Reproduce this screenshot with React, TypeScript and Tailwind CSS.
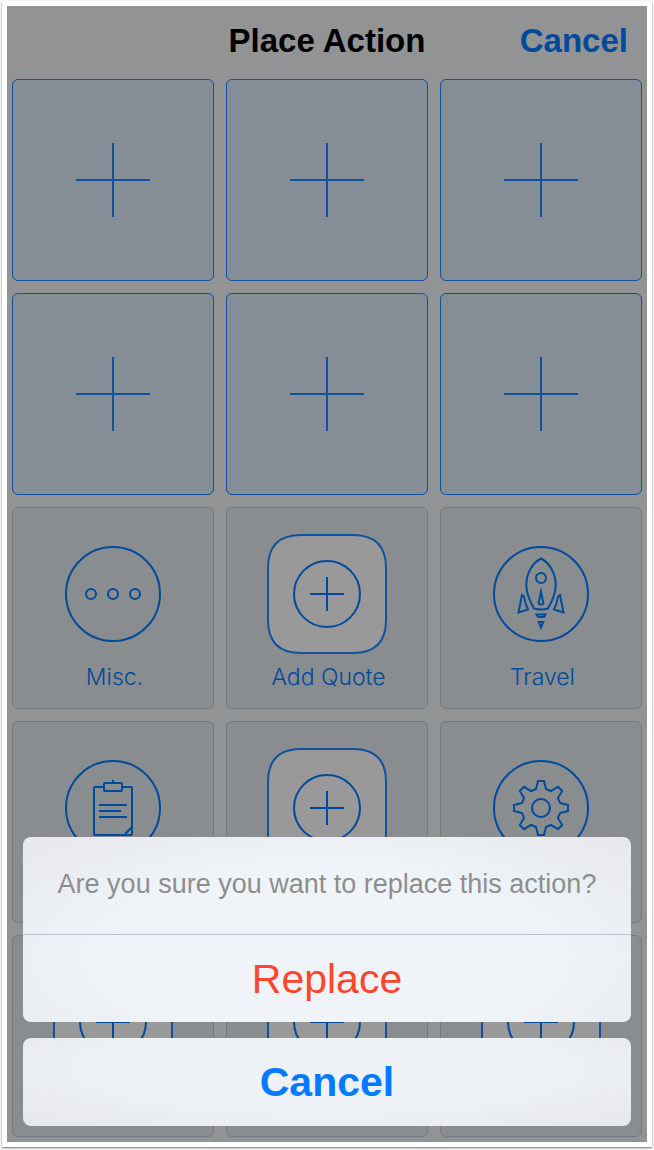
import type { ReactNode } from "react";

type IconName = "dots" | "app" | "rocket" | "clipboard" | "gear";

type Tile =
  | { kind: "empty" }
  | { kind: "action"; icon: IconName; label?: string };

const tiles: Tile[] = [
  { kind: "empty" },
  { kind: "empty" },
  { kind: "empty" },
  { kind: "empty" },
  { kind: "empty" },
  { kind: "empty" },
  { kind: "action", icon: "dots", label: "Misc." },
  { kind: "action", icon: "app", label: "Add Quote" },
  { kind: "action", icon: "rocket", label: "Travel" },
  { kind: "action", icon: "clipboard" },
  { kind: "action", icon: "app" },
  { kind: "action", icon: "gear" },
  { kind: "action", icon: "app" },
  { kind: "action", icon: "app" },
  { kind: "action", icon: "app" },
];

// Outline of an eight-toothed gear centred on (60, 60).
function gearPath(): string {
  const tooth = [
    [-5, -19],
    [-3, -27],
    [3, -27],
    [5, -19],
  ];
  const points: string[] = [];
  for (let i = 0; i < 8; i++) {
    const a = (i * Math.PI) / 4;
    for (const [x, y] of tooth) {
      const px = 60 + x * Math.cos(a) - y * Math.sin(a);
      const py = 60 + x * Math.sin(a) + y * Math.cos(a);
      points.push(`${px.toFixed(2)} ${py.toFixed(2)}`);
    }
  }
  return `M${points.join("L")}Z`;
}

const glyphs: Record<IconName, ReactNode> = {
  dots: (
    <>
      <circle cx="60" cy="60" r="47" />
      <circle cx="38" cy="60" r="5" />
      <circle cx="60" cy="60" r="5" />
      <circle cx="82" cy="60" r="5" />
    </>
  ),
  app: (
    <>
      <path
        d="M34 1H86C108 1 119 12 119 34V86C119 108 108 119 86 119H34C12 119 1 108 1 86V34C1 12 12 1 34 1Z"
        fill="#999999"
        stroke="#1152a0"
      />
      <circle cx="60" cy="60" r="33" />
      <path d="M60 43V77M43 60H77" />
    </>
  ),
  rocket: (
    <>
      <circle cx="60" cy="60" r="47" />
      <path d="M60 24.500C51.500 29 45.300 39 45.300 51C45.300 60 49 67.500 53 74.500Q60 76.500 67 74.500C71 67.500 74.700 60 74.700 51C74.700 39 68.500 29 60 24.500Z" />
      <circle cx="60" cy="44" r="5" />
      <path
        d="M60 57.500L57.500 69.500Q60 71.500 62.500 69.500Z"
        strokeMiterlimit="10"
      />
      <path d="M41 61L37.500 78.500L47 75.500C44.500 70.500 43.500 66.500 43 62.500Z" />
      <path d="M79 61L82.500 78.500L73 75.500C75.500 70.500 76.500 66.500 77 62.500Z" />
      <path d="M55.500 80.500H64.500L63 83H57Z" />
      <path d="M57.800 88H62.200L60 93.500Z" />
    </>
  ),
  clipboard: (
    <>
      <circle cx="60" cy="60" r="47" />
      <path d="M51 39H42Q41 39 41 40V86Q41 87 42 87H78Q79 87 79 86V40Q79 39 78 39H69" />
      <rect x="51" y="35" width="18" height="8" rx="1" />
      <path d="M60 32V35M46 57H74M46 63H68M46 69H74M72 86L79 79" />
    </>
  ),
  gear: (
    <>
      <circle cx="60" cy="60" r="47" />
      <path d={gearPath()} />
      <circle cx="60" cy="60" r="9" />
    </>
  ),
};

function ActionIcon({ name }: { name: IconName }) {
  return (
    <svg
      viewBox="0 0 120 120"
      className="size-[120px] shrink-0 fill-none stroke-[#004a9b] stroke-2"
      aria-hidden="true"
    >
      {glyphs[name]}
    </svg>
  );
}

function EmptyTile() {
  return (
    <button
      type="button"
      aria-label="Empty slot"
      className="flex aspect-square items-center justify-center rounded-md border border-[#1152a0] bg-[#858d96]"
    >
      <svg
        viewBox="0 0 74 74"
        className="size-[74px] fill-none stroke-[#1152a0] stroke-2"
        aria-hidden="true"
      >
        <path d="M37 0V74M0 37H74" />
      </svg>
    </button>
  );
}

function ActionTile({ icon, label }: { icon: IconName; label?: string }) {
  return (
    <button
      type="button"
      aria-label={label ?? "Action"}
      className="flex aspect-square flex-col items-center justify-start gap-2 rounded-md border border-[#717a84] bg-[#898d90] pt-[26px]"
    >
      <ActionIcon name={icon} />
      {label && (
        <span className="pl-[3px] font-['Inter','Liberation_Sans',sans-serif] text-[23px] leading-[30px] font-light text-[#004a9b]">
          {label}
        </span>
      )}
    </button>
  );
}

function ActionSheet() {
  return (
    <div
      role="dialog"
      aria-labelledby="sheet-message"
      className="absolute inset-x-4 bottom-4 flex flex-col gap-4"
    >
      <div className="overflow-hidden rounded-lg bg-radial-[ellipse_at_50%_65%] from-[#f0f4f9] from-50% to-[#e6e8ea]">
        <p
          id="sheet-message"
          className="flex h-[97px] items-center justify-center px-4 pb-1 text-center text-[27px] leading-8 text-[#8e8e8e]"
        >
          Are you sure you want to replace this action?
        </p>
        <button
          type="button"
          className="h-[88px] w-full border-t border-[#b1c5db] text-[41px] leading-[48px] text-[#ff462b]"
        >
          Replace
        </button>
      </div>
      <button
        type="button"
        className="h-[88px] w-full rounded-lg bg-radial-[ellipse_at_50%_35%] from-[#eef2f6] from-50% to-[#e6e7e9] text-[41px] leading-[48px] font-bold text-[#007aff]"
      >
        Cancel
      </button>
    </div>
  );
}

export default function App() {
  return (
    <div className="bg-white px-[2px] pt-px pb-[3px] font-['Liberation_Sans',Arial,sans-serif]">
      <div className="bg-white p-[5px] shadow-[0_1px_2px_rgba(0,0,0,0.6)]">
        <main className="relative bg-[#929394]">
          <header className="grid h-[73px] grid-cols-[1fr_auto_1fr] items-center px-[19px] pb-1 text-[33px] leading-10 font-bold">
            <h1 className="col-start-2 text-black">Place Action</h1>
            <button type="button" className="justify-self-end text-[#004a9b]">
              Cancel
            </button>
          </header>
          <div className="grid grid-cols-3 gap-3 px-[5px] pb-[5px]">
            {tiles.map((tile, i) =>
              tile.kind === "empty" ? (
                <EmptyTile key={i} />
              ) : (
                <ActionTile key={i} icon={tile.icon} label={tile.label} />
              ),
            )}
          </div>
          <ActionSheet />
        </main>
      </div>
    </div>
  );
}
